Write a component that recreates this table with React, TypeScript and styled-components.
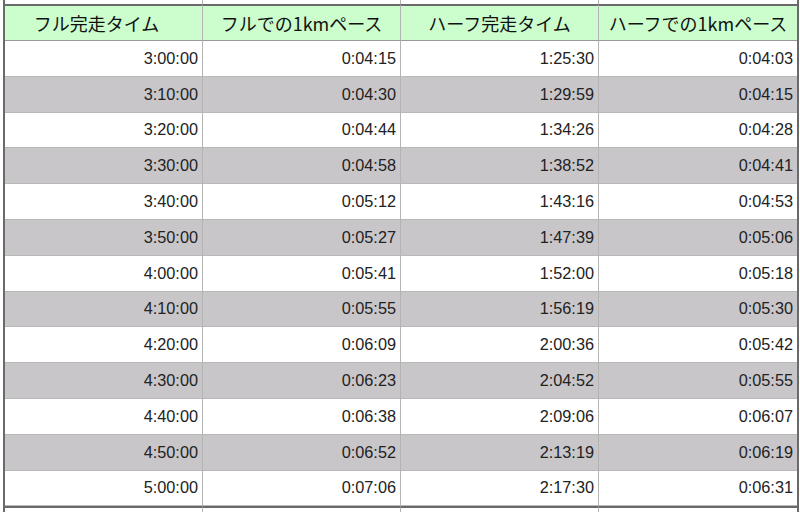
import styled, { createGlobalStyle } from "styled-components";

const GlobalStyle = createGlobalStyle`
  html, body {
    margin: 0;
    padding: 0;
    background: #ffffff;
    overflow: hidden;
  }
  body {
    font-family: "Liberation Sans", Arial, sans-serif;
  }
`;

const Sheet = styled.div`
  width: 792px;
  height: 512px;
  margin-left: 3px;
  border-left: 2px solid #6a6a6a;
  border-right: 2px solid #6a6a6a;
  display: grid;
  grid-template-columns: repeat(4, 1fr);
  grid-template-rows: 4px 37px repeat(13, 35.8px) 1fr;
`;

// thin slivers of the neighbouring rows above and below the table
const Edge = styled.div<{ $bottom?: boolean }>`
  border-right: 1px solid #b4b4b4;
  border-top: ${(p) => (p.$bottom ? "2px solid #6a6a6a" : "none")};
  &:nth-child(4n) {
    border-right: none;
  }
`;

const HeadCell = styled.div<{ $shift?: number }>`
  background: #ccfdcc;
  border-top: 2px solid #6a6a6a;
  border-bottom: 1px solid #9a9a9a;
  border-right: 1px solid #b4b4b4;
  display: flex;
  align-items: center;
  justify-content: center;
  padding-right: ${(p) => p.$shift ?? 0}px;
  font-family: "Noto Sans CJK JP", "Noto Sans", sans-serif;
  font-size: 18px;
  color: #111111;
  white-space: nowrap;
  &:nth-child(4n) {
    border-right: none;
  }
`;

const Cell = styled.div<{ $shade: boolean }>`
  background: ${(p) => (p.$shade ? "#c9c6ca" : "#ffffff")};
  border-right: 1px solid #b4b4b4;
  border-bottom: 1px solid #b8b8b8;
  display: flex;
  align-items: center;
  justify-content: flex-end;
  padding-right: 4px;
  font-size: 16.3px;
  color: #222222;
  &:nth-child(4n) {
    border-right: none;
  }
`;

const headers = ["フル完走タイム", "フルでの1kmペース", "ハーフ完走タイム", "ハーフでの1kmペース"];

const rows: string[][] = [
  ["3:00:00", "0:04:15", "1:25:30", "0:04:03"],
  ["3:10:00", "0:04:30", "1:29:59", "0:04:15"],
  ["3:20:00", "0:04:44", "1:34:26", "0:04:28"],
  ["3:30:00", "0:04:58", "1:38:52", "0:04:41"],
  ["3:40:00", "0:05:12", "1:43:16", "0:04:53"],
  ["3:50:00", "0:05:27", "1:47:39", "0:05:06"],
  ["4:00:00", "0:05:41", "1:52:00", "0:05:18"],
  ["4:10:00", "0:05:55", "1:56:19", "0:05:30"],
  ["4:20:00", "0:06:09", "2:00:36", "0:05:42"],
  ["4:30:00", "0:06:23", "2:04:52", "0:05:55"],
  ["4:40:00", "0:06:38", "2:09:06", "0:06:07"],
  ["4:50:00", "0:06:52", "2:13:19", "0:06:19"],
  ["5:00:00", "0:07:06", "2:17:30", "0:06:31"],
];

export default function App() {
  return (
    <>
      <GlobalStyle />
      <Sheet>
        {headers.map((h) => (
          <Edge key={"top" + h} />
        ))}
        {headers.map((h, i) => (
          <HeadCell key={h} $shift={i === 0 ? 14 : 0}>
            {h}
          </HeadCell>
        ))}
        {rows.map((row, i) =>
          row.map((v, j) => (
            <Cell key={i + "-" + j} $shade={i % 2 === 1}>
              {v}
            </Cell>
          ))
        )}
        {headers.map((h) => (
          <Edge key={"bottom" + h} $bottom />
        ))}
      </Sheet>
    </>
  );
}
